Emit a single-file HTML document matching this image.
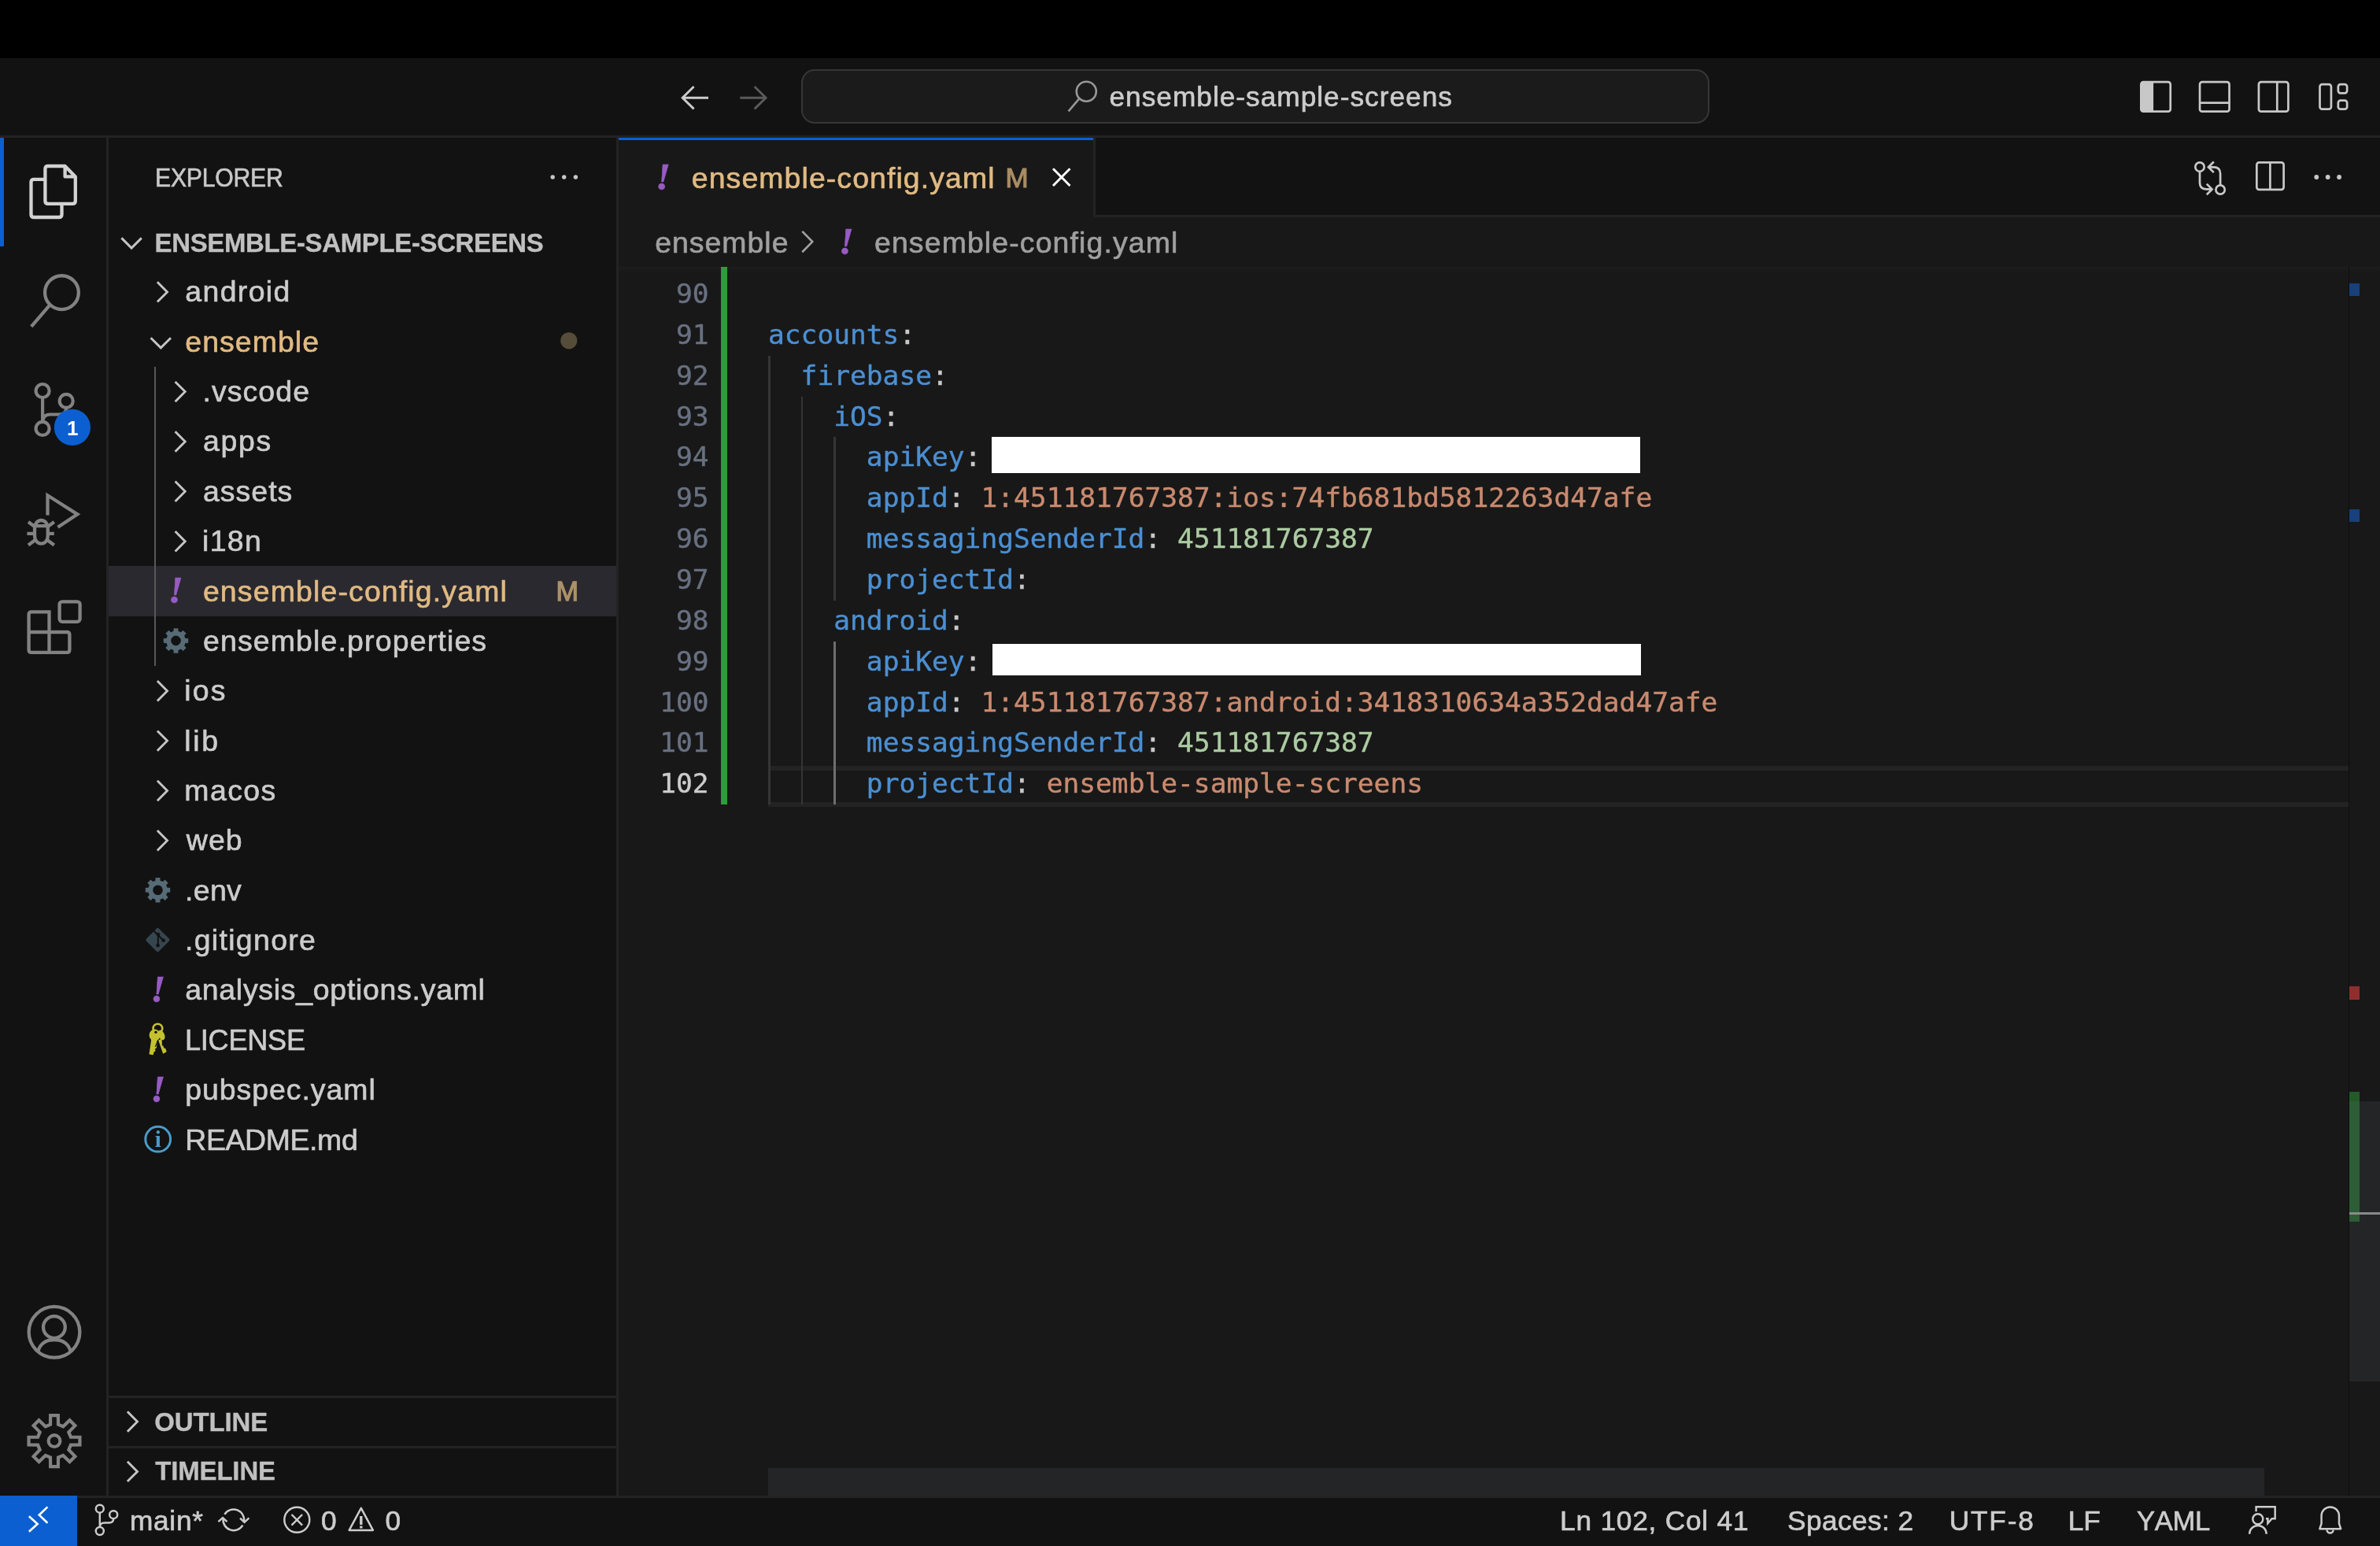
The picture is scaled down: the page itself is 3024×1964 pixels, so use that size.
<!DOCTYPE html>
<html lang="en"><head><meta charset="utf-8"><title>ensemble-config.yaml — ensemble-sample-screens</title>
<style>
html,body{margin:0;padding:0;width:3024px;height:1964px;overflow:hidden;background:#000}
body{position:relative;font-family:"Liberation Sans",sans-serif;color:#ccc;font-kerning:none;-webkit-font-smoothing:antialiased}
.b{position:absolute}
.t{position:absolute;white-space:pre;display:block;-webkit-text-stroke:0.65px currentColor}
.m{-webkit-text-stroke:0.4px currentColor;font-family:"DejaVu Sans Mono","Liberation Mono",monospace;font-size:34.56px;line-height:51.84px}
svg.ov{position:absolute;left:0;top:0}
#w{position:absolute;left:0;top:0;width:3024px;height:1964px;will-change:transform}
</style></head><body><div id="w">
<div class="b" style="left:0px;top:74px;width:3024px;height:98px;background:#121212;"></div>
<div class="b" style="left:0px;top:172px;width:3024px;height:3px;background:#232323;"></div>
<div class="b" style="left:0px;top:175px;width:135px;height:1725px;background:#121212;"></div>
<div class="b" style="left:135px;top:175px;width:3px;height:1725px;background:#232323;"></div>
<div class="b" style="left:138px;top:175px;width:645px;height:1725px;background:#121212;"></div>
<div class="b" style="left:783px;top:175px;width:3px;height:1725px;background:#232323;"></div>
<div class="b" style="left:786px;top:175px;width:2238px;height:1725px;background:#181818;"></div>
<div class="b" style="left:0px;top:1900px;width:3024px;height:64px;background:#121212;"></div>
<div class="b" style="left:0px;top:1900px;width:3024px;height:3px;background:#232323;"></div>
<div class="b" style="left:1018px;top:88.4px;width:1154px;height:68.8px;background:#1b1b1b;box-sizing:border-box;border:2.5px solid #363636;border-radius:17px;"></div>
<span class="t" style="left:1409.50px;top:100.00px;font-size:35.25px;line-height:46px;color:#ccc;letter-spacing:1.000px;">ensemble-sample-screens</span>
<div class="b" style="left:0px;top:175px;width:5px;height:138px;background:#0b5fd0;"></div>
<span class="t" style="left:196.92px;top:204.10px;font-size:32.95px;line-height:43px;color:#c8c8c8;letter-spacing:-0.250px;transform:scaleX(0.9160);transform-origin:0 0;">EXPLORER</span>
<span class="t" style="left:196.60px;top:286.70px;font-size:32.95px;line-height:43px;color:#c0c0c0;letter-spacing:-0.329px;font-weight:700;-webkit-text-stroke:0.3px;">ENSEMBLE-SAMPLE-SCREENS</span>
<div class="b" style="left:138px;top:719.3599999999999px;width:645px;height:63.36px;background:#2a292f;"></div>
<div class="b" style="left:196px;top:466px;width:2px;height:380.0799999999999px;background:#585858;"></div>
<span class="t" style="left:235.31px;top:346.40px;font-size:37.44px;line-height:49px;color:#cccccc;letter-spacing:1.368px;">android</span>
<span class="t" style="left:235.31px;top:409.76px;font-size:37.44px;line-height:49px;color:#e0ba83;letter-spacing:1.074px;">ensemble</span>
<span class="t" style="left:257.48px;top:473.12px;font-size:37.44px;line-height:49px;color:#cccccc;letter-spacing:1.092px;">.vscode</span>
<span class="t" style="left:257.91px;top:536.48px;font-size:37.44px;line-height:49px;color:#cccccc;letter-spacing:1.685px;">apps</span>
<span class="t" style="left:257.91px;top:599.84px;font-size:37.44px;line-height:49px;color:#cccccc;letter-spacing:1.047px;">assets</span>
<span class="t" style="left:257.00px;top:663.20px;font-size:37.44px;line-height:49px;color:#cccccc;letter-spacing:1.317px;">i18n</span>
<span class="t" style="left:257.91px;top:726.56px;font-size:37.44px;line-height:49px;color:#e0ba83;letter-spacing:1.154px;">ensemble-config.yaml</span>
<span class="t" style="left:213.67px;top:718.16px;font-size:49px;line-height:64px;color:#975bc2;font-weight:700;font-style:italic;font-family:'Liberation Serif', serif;-webkit-text-stroke:0.6px;">!</span>
<span class="t" style="left:257.91px;top:789.92px;font-size:37.44px;line-height:49px;color:#cccccc;letter-spacing:1.173px;">ensemble.properties</span>
<span class="t" style="left:234.30px;top:853.28px;font-size:37.44px;line-height:49px;color:#cccccc;letter-spacing:2.149px;">ios</span>
<span class="t" style="left:234.28px;top:916.64px;font-size:37.44px;line-height:49px;color:#cccccc;letter-spacing:2.618px;">lib</span>
<span class="t" style="left:234.31px;top:980.00px;font-size:37.44px;line-height:49px;color:#cccccc;letter-spacing:1.442px;">macos</span>
<span class="t" style="left:236.85px;top:1043.36px;font-size:37.44px;line-height:49px;color:#cccccc;letter-spacing:1.067px;">web</span>
<span class="t" style="left:234.98px;top:1106.72px;font-size:37.44px;line-height:49px;color:#cccccc;letter-spacing:0.360px;">.env</span>
<span class="t" style="left:234.98px;top:1170.08px;font-size:37.44px;line-height:49px;color:#cccccc;letter-spacing:1.329px;">.gitignore</span>
<span class="t" style="left:235.21px;top:1233.44px;font-size:37.44px;line-height:49px;color:#cccccc;letter-spacing:0.732px;">analysis_options.yaml</span>
<span class="t" style="left:191.17px;top:1225.04px;font-size:49px;line-height:64px;color:#975bc2;font-weight:700;font-style:italic;font-family:'Liberation Serif', serif;-webkit-text-stroke:0.6px;">!</span>
<span class="t" style="left:235.44px;top:1296.80px;font-size:37.44px;line-height:49px;color:#cccccc;letter-spacing:-0.250px;transform:scaleX(0.9641);transform-origin:0 0;">LICENSE</span>
<span class="t" style="left:235.19px;top:1360.16px;font-size:37.44px;line-height:49px;color:#cccccc;letter-spacing:0.974px;">pubspec.yaml</span>
<span class="t" style="left:191.17px;top:1351.76px;font-size:49px;line-height:64px;color:#975bc2;font-weight:700;font-style:italic;font-family:'Liberation Serif', serif;-webkit-text-stroke:0.6px;">!</span>
<span class="t" style="left:235.33px;top:1423.52px;font-size:37.44px;line-height:49px;color:#cccccc;letter-spacing:-0.389px;">README.md</span>
<span class="t" style="left:706.59px;top:728.76px;font-size:34.23px;line-height:44px;color:#ac9168;-webkit-text-stroke:1.3px;">M</span>
<div class="b" style="left:138px;top:1773px;width:645px;height:3px;background:#232323;"></div>
<div class="b" style="left:138px;top:1837px;width:645px;height:3px;background:#232323;"></div>
<span class="t" style="left:196.25px;top:1784.60px;font-size:32.95px;line-height:43px;color:#c0c0c0;letter-spacing:-0.111px;font-weight:700;-webkit-text-stroke:0.3px;">OUTLINE</span>
<span class="t" style="left:197.23px;top:1847.40px;font-size:32.95px;line-height:43px;color:#c0c0c0;letter-spacing:-0.129px;font-weight:700;-webkit-text-stroke:0.3px;">TIMELINE</span>
<div class="b" style="left:786px;top:175px;width:2238px;height:98px;background:#121212;"></div>
<div class="b" style="left:786px;top:273px;width:2238px;height:3px;background:#232323;"></div>
<div class="b" style="left:786px;top:175px;width:603px;height:101px;background:#181818;"></div>
<div class="b" style="left:1389px;top:175px;width:3px;height:98px;background:#232323;"></div>
<div class="b" style="left:786px;top:175px;width:603px;height:3px;background:#0b5fd0;"></div>
<span class="t" style="left:833.07px;top:193.10px;font-size:49px;line-height:64px;color:#975bc2;font-weight:700;font-style:italic;font-family:'Liberation Serif', serif;-webkit-text-stroke:0.6px;">!</span>
<span class="t" style="left:878.81px;top:201.80px;font-size:37.44px;line-height:49px;color:#e0ba83;letter-spacing:1.091px;">ensemble-config.yaml</span>
<span class="t" style="left:1277.62px;top:202.70px;font-size:35.05px;line-height:46px;color:#a78c64;-webkit-text-stroke:1.2px;">M</span>
<span class="t" style="left:832.21px;top:283.70px;font-size:37.44px;line-height:49px;color:#a0a0a0;letter-spacing:1.002px;">ensemble</span>
<span class="t" style="left:1065.77px;top:275.00px;font-size:49px;line-height:64px;color:#975bc2;font-weight:700;font-style:italic;font-family:'Liberation Serif', serif;-webkit-text-stroke:0.6px;">!</span>
<span class="t" style="left:1111.01px;top:283.70px;font-size:37.44px;line-height:49px;color:#a0a0a0;letter-spacing:1.123px;">ensemble-config.yaml</span>
<div class="b" style="left:786px;top:339px;width:2238px;height:7px;background:linear-gradient(#1d1d1d,#181818);"></div>
<div class="b" style="left:916px;top:339px;width:8.3px;height:683px;background:#2c9c3c;"></div>
<div class="b" style="left:976px;top:972.6800000000001px;width:2008px;height:6px;background:#232323;"></div>
<div class="b" style="left:976px;top:1019.3800000000001px;width:2008px;height:6px;background:#232323;"></div>
<span class="t m" style="left:858.99px;top:348.10px;color:#687080">90</span>
<span class="t m" style="left:858.99px;top:399.94px;color:#687080">91</span>
<span class="t m" style="left:976.00px;top:399.94px"><span style="color:#4b8fd2">accounts</span><span style="color:#c8c8c8">:</span></span>
<span class="t m" style="left:858.99px;top:451.78px;color:#687080">92</span>
<span class="t m" style="left:1017.61px;top:451.78px"><span style="color:#4b8fd2">firebase</span><span style="color:#c8c8c8">:</span></span>
<div class="b" style="left:976.0px;top:451.78px;width:2.9px;height:52.14px;background:#353535;"></div>
<span class="t m" style="left:858.99px;top:503.62px;color:#687080">93</span>
<span class="t m" style="left:1059.23px;top:503.62px"><span style="color:#4b8fd2">iOS</span><span style="color:#c8c8c8">:</span></span>
<div class="b" style="left:976.0px;top:503.62px;width:2.9px;height:52.14px;background:#353535;"></div>
<div class="b" style="left:1017.6px;top:503.62px;width:2.9px;height:52.14px;background:#353535;"></div>
<span class="t m" style="left:858.99px;top:555.46px;color:#687080">94</span>
<span class="t m" style="left:1100.84px;top:555.46px"><span style="color:#4b8fd2">apiKey</span><span style="color:#c8c8c8">:</span></span>
<div class="b" style="left:976.0px;top:555.46px;width:2.9px;height:52.14px;background:#353535;"></div>
<div class="b" style="left:1017.6px;top:555.46px;width:2.9px;height:52.14px;background:#353535;"></div>
<div class="b" style="left:1059.2px;top:555.46px;width:2.9px;height:52.14px;background:#353535;"></div>
<span class="t m" style="left:858.99px;top:607.30px;color:#687080">95</span>
<span class="t m" style="left:1100.84px;top:607.30px"><span style="color:#4b8fd2">appId</span><span style="color:#c8c8c8">:</span><span style="color:#c98a6f"> 1:451181767387:ios:74fb681bd5812263d47afe</span></span>
<div class="b" style="left:976.0px;top:607.3px;width:2.9px;height:52.14px;background:#353535;"></div>
<div class="b" style="left:1017.6px;top:607.3px;width:2.9px;height:52.14px;background:#353535;"></div>
<div class="b" style="left:1059.2px;top:607.3px;width:2.9px;height:52.14px;background:#353535;"></div>
<span class="t m" style="left:858.99px;top:659.14px;color:#687080">96</span>
<span class="t m" style="left:1100.84px;top:659.14px"><span style="color:#4b8fd2">messagingSenderId</span><span style="color:#c8c8c8">:</span><span style="color:#accba2"> 451181767387</span></span>
<div class="b" style="left:976.0px;top:659.14px;width:2.9px;height:52.14px;background:#353535;"></div>
<div class="b" style="left:1017.6px;top:659.14px;width:2.9px;height:52.14px;background:#353535;"></div>
<div class="b" style="left:1059.2px;top:659.14px;width:2.9px;height:52.14px;background:#353535;"></div>
<span class="t m" style="left:858.99px;top:710.98px;color:#687080">97</span>
<span class="t m" style="left:1100.84px;top:710.98px"><span style="color:#4b8fd2">projectId</span><span style="color:#c8c8c8">:</span></span>
<div class="b" style="left:976.0px;top:710.98px;width:2.9px;height:52.14px;background:#353535;"></div>
<div class="b" style="left:1017.6px;top:710.98px;width:2.9px;height:52.14px;background:#353535;"></div>
<div class="b" style="left:1059.2px;top:710.98px;width:2.9px;height:52.14px;background:#353535;"></div>
<span class="t m" style="left:858.99px;top:762.82px;color:#687080">98</span>
<span class="t m" style="left:1059.23px;top:762.82px"><span style="color:#4b8fd2">android</span><span style="color:#c8c8c8">:</span></span>
<div class="b" style="left:976.0px;top:762.82px;width:2.9px;height:52.14px;background:#353535;"></div>
<div class="b" style="left:1017.6px;top:762.82px;width:2.9px;height:52.14px;background:#353535;"></div>
<span class="t m" style="left:858.99px;top:814.66px;color:#687080">99</span>
<span class="t m" style="left:1100.84px;top:814.66px"><span style="color:#4b8fd2">apiKey</span><span style="color:#c8c8c8">:</span></span>
<div class="b" style="left:976.0px;top:814.66px;width:2.9px;height:52.14px;background:#353535;"></div>
<div class="b" style="left:1017.6px;top:814.66px;width:2.9px;height:52.14px;background:#353535;"></div>
<div class="b" style="left:1059.2px;top:814.66px;width:2.9px;height:52.14px;background:#6e6e6e;"></div>
<span class="t m" style="left:838.18px;top:866.50px;color:#687080">100</span>
<span class="t m" style="left:1100.84px;top:866.50px"><span style="color:#4b8fd2">appId</span><span style="color:#c8c8c8">:</span><span style="color:#c98a6f"> 1:451181767387:android:3418310634a352dad47afe</span></span>
<div class="b" style="left:976.0px;top:866.5px;width:2.9px;height:52.14px;background:#353535;"></div>
<div class="b" style="left:1017.6px;top:866.5px;width:2.9px;height:52.14px;background:#353535;"></div>
<div class="b" style="left:1059.2px;top:866.5px;width:2.9px;height:52.14px;background:#6e6e6e;"></div>
<span class="t m" style="left:838.18px;top:918.34px;color:#687080">101</span>
<span class="t m" style="left:1100.84px;top:918.34px"><span style="color:#4b8fd2">messagingSenderId</span><span style="color:#c8c8c8">:</span><span style="color:#accba2"> 451181767387</span></span>
<div class="b" style="left:976.0px;top:918.34px;width:2.9px;height:52.14px;background:#353535;"></div>
<div class="b" style="left:1017.6px;top:918.34px;width:2.9px;height:52.14px;background:#353535;"></div>
<div class="b" style="left:1059.2px;top:918.34px;width:2.9px;height:52.14px;background:#6e6e6e;"></div>
<span class="t m" style="left:838.18px;top:970.18px;color:#cccccc">102</span>
<span class="t m" style="left:1100.84px;top:970.18px"><span style="color:#4b8fd2">projectId</span><span style="color:#c8c8c8">:</span><span style="color:#c98a6f"> ensemble-sample-screens</span></span>
<div class="b" style="left:976.0px;top:970.18px;width:2.9px;height:52.14px;background:#353535;"></div>
<div class="b" style="left:1017.6px;top:970.18px;width:2.9px;height:52.14px;background:#353535;"></div>
<div class="b" style="left:1059.2px;top:970.18px;width:2.9px;height:52.14px;background:#6e6e6e;"></div>
<div class="b" style="left:1260px;top:555px;width:824px;height:46px;background:#ffffff;"></div>
<div class="b" style="left:1261px;top:818px;width:824px;height:40px;background:#ffffff;"></div>
<div class="b" style="left:2984px;top:339px;width:1px;height:1561px;background:#0d0d0d;"></div>
<div class="b" style="left:2985px;top:360px;width:13px;height:16px;background:#18407a;"></div>
<div class="b" style="left:2985px;top:646.6px;width:13px;height:16px;background:#18407a;"></div>
<div class="b" style="left:2985px;top:1253.4px;width:13.3px;height:16.3px;background:#922d2d;"></div>
<div class="b" style="left:2985px;top:1386.8px;width:13px;height:165.5px;background:#225a28;"></div>
<div class="b" style="left:2985px;top:1399px;width:39px;height:356.3px;background:rgba(110,112,120,0.15);"></div>
<div class="b" style="left:2985px;top:1539.5px;width:39px;height:3px;background:#8a8a8a;"></div>
<div class="b" style="left:976px;top:1864.5px;width:1901px;height:36px;background:#242527;"></div>
<div class="b" style="left:0px;top:1900px;width:98px;height:64px;background:#0b5fd0;"></div>
<span class="t" style="left:164.96px;top:1908.70px;font-size:35.25px;line-height:46px;color:#ccc;letter-spacing:0.718px;">main*</span>
<span class="t" style="left:407.92px;top:1908.70px;font-size:35.25px;line-height:46px;color:#ccc;">0</span>
<span class="t" style="left:489.42px;top:1908.70px;font-size:35.25px;line-height:46px;color:#ccc;">0</span>
<span class="t" style="left:1982.11px;top:1909.00px;font-size:35.25px;line-height:46px;color:#ccc;letter-spacing:0.778px;">Ln 102, Col 41</span>
<span class="t" style="left:2271.10px;top:1909.00px;font-size:35.25px;line-height:46px;color:#ccc;letter-spacing:0.401px;">Spaces: 2</span>
<span class="t" style="left:2476.78px;top:1909.00px;font-size:35.25px;line-height:46px;color:#ccc;letter-spacing:1.797px;">UTF-8</span>
<span class="t" style="left:2627.81px;top:1909.00px;font-size:35.25px;line-height:46px;color:#ccc;letter-spacing:-0.233px;">LF</span>
<span class="t" style="left:2714.94px;top:1909.00px;font-size:35.25px;line-height:46px;color:#ccc;letter-spacing:-0.250px;transform:scaleX(0.9786);transform-origin:0 0;">YAML</span>
<svg class="ov" width="3024" height="1964" viewBox="0 0 3024 1964" fill="none" stroke-linecap="butt" stroke-linejoin="miter">
<path d="M900.0 124.2H867.2 M881.6 110.0L867.2 124.2L881.6 138.4" stroke="#cccccc" stroke-width="2.9"/>
<path d="M940.3 124.2H973.0999999999999 M958.6999999999999 110.0L973.0999999999999 124.2L958.6999999999999 138.4" stroke="#5a5a5a" stroke-width="2.9"/>
<circle cx="1380.3" cy="116.2" r="12.5" stroke="#989898" stroke-width="2.6"/><path d="M1371.4 125.1L1357.6 141.4" stroke="#989898" stroke-width="2.6"/>
<rect x="2720.35" y="104.15" width="37.40" height="37.50" rx="3" stroke="#c8c8c8" stroke-width="2.7" />
<path d="M2722.5 104.3H2736.1V141.5H2722.5Q2720.5 141.5 2720.5 139.5V106.3Q2720.5 104.3 2722.5 104.3Z" fill="#c8c8c8"/>
<rect x="2795.05" y="104.15" width="37.50" height="37.50" rx="3" stroke="#c8c8c8" stroke-width="2.7" />
<path d="M2795 130.6H2832.5" stroke="#c8c8c8" stroke-width="2.7"/>
<rect x="2869.95" y="104.15" width="37.50" height="37.50" rx="3" stroke="#c8c8c8" stroke-width="2.7" />
<path d="M2893.3 104V141.8" stroke="#c8c8c8" stroke-width="2.7"/>
<rect x="2947.55" y="107.05" width="14.40" height="31.60" rx="3" stroke="#c8c8c8" stroke-width="2.7" />
<rect x="2970.85" y="107.05" width="11.30" height="11.30" rx="3" stroke="#c8c8c8" stroke-width="2.7" />
<rect x="2970.85" y="127.65" width="11.30" height="11.00" rx="3" stroke="#c8c8c8" stroke-width="2.7" />
<path d="M82.6 211H61Q57.4 211 57.4 214.6V255.3Q57.4 258.9 61 258.9H92.2Q95.8 258.9 95.8 255.3V224.4Z M82.6 211V224.4H95.8" stroke="#d2d2d2" stroke-width="4.3" stroke-linejoin="round"/>
<path d="M57.4 227.9H43.1Q39.5 227.9 39.5 231.5V272.4Q39.5 276 43.1 276H74.9Q78.5 276 78.5 272.4V258.9" stroke="#d2d2d2" stroke-width="4.3"/>
<circle cx="78.45" cy="371.65" r="21.4" stroke="#828282" stroke-width="4.3"/><path d="M63.6 387.1L39.8 414.9" stroke="#828282" stroke-width="4.3"/>
<g stroke="#828282" stroke-width="4.2"><circle cx="54.1" cy="496.5" r="8.5"/><circle cx="84.2" cy="509.4" r="8.5"/><circle cx="54.1" cy="544.4" r="8.5"/><path d="M54.1 505V536"/><path d="M84.2 517.9Q84.2 526.5 75 526.5H64Q54.1 526.5 54.1 537"/></g>
<circle cx="91.9" cy="542.9" r="23.1" fill="#0b5fd0"/><text x="92.2" y="552.8" text-anchor="middle" font-family="Liberation Sans, sans-serif" font-weight="700" font-size="26" fill="#fff" stroke="none">1</text>
<g stroke="#828282" stroke-width="4.3"><path d="M60.5 654.5V629.3L98.4 653.4L73.5 669.8"/><rect x="44.05" y="661" width="16.7" height="29.7" rx="8.35" ry="9.5"/><path d="M34.4 677.9H44.1M60.7 677.9H68.8M36 663L45 669.8M68.8 663L59.8 669.8M36 692.5L45 685.8M68.8 692.5L59.8 685.8M44.5 668.2H60.3"/></g>
<g stroke="#828282" stroke-width="4.3"><path d="M40 777.4H62.5V803H85Q88.4 803 88.4 806.4V825.4Q88.4 828.8 85 828.8H40Q36.6 828.8 36.6 825.4V780.8Q36.6 777.4 40 777.4ZM36.6 803H62.5V828.8"/><rect x="75.6" y="764.3" width="26" height="25.5" rx="3.5"/></g>
<g stroke="#828282" stroke-width="4.3"><circle cx="69" cy="1692.3" r="32.35"/><circle cx="68.9" cy="1686" r="13.9"/><path d="M48.3 1717.2C50.5 1707 58.5 1702 69 1702C79.5 1702 87.5 1707 89.7 1717.2"/></g>
<path d="M63.98 1809.69L64.15 1798.16L73.85 1798.16L74.02 1809.69L80.23 1812.27L88.51 1804.23L95.37 1811.09L87.33 1819.37L89.91 1825.58L101.44 1825.75L101.44 1835.45L89.91 1835.62L87.33 1841.83L95.37 1850.11L88.51 1856.97L80.23 1848.93L74.02 1851.51L73.85 1863.04L64.15 1863.04L63.98 1851.51L57.77 1848.93L49.49 1856.97L42.63 1850.11L50.67 1841.83L48.09 1835.62L36.56 1835.45L36.56 1825.75L48.09 1825.58L50.67 1819.37L42.63 1811.09L49.49 1804.23L57.77 1812.27Z" stroke="#828282" stroke-width="4.2" stroke-linejoin="miter"/><circle cx="69" cy="1830.6" r="7.4" stroke="#828282" stroke-width="4.2"/>
<circle cx="702.2" cy="225" r="2.7" fill="#c8c8c8"/>
<circle cx="716.7" cy="225" r="2.7" fill="#c8c8c8"/>
<circle cx="731.4" cy="225" r="2.7" fill="#c8c8c8"/>
<path d="M154.4 302.4L167.1 315.1L179.8 302.4" stroke="#c5c5c5" stroke-width="2.9"/>
<path d="M199.9 358.2L212.5 370.9L199.9 383.6" stroke="#c5c5c5" stroke-width="2.9"/>
<path d="M191.6 429.2L204.3 441.9L217.0 429.2" stroke="#c5c5c5" stroke-width="2.9"/>
<path d="M222.6 484.9L235.2 497.6L222.6 510.3" stroke="#c5c5c5" stroke-width="2.9"/>
<path d="M222.6 548.3L235.2 561.0L222.6 573.7" stroke="#c5c5c5" stroke-width="2.9"/>
<path d="M222.6 611.6L235.2 624.3L222.6 637.0" stroke="#c5c5c5" stroke-width="2.9"/>
<path d="M222.6 675.0L235.2 687.7L222.6 700.4" stroke="#c5c5c5" stroke-width="2.9"/>
<path fill-rule="evenodd" d="M220.50 801.87L220.58 798.17L226.42 798.17L226.50 801.87L229.89 803.27L232.56 800.71L236.69 804.84L234.13 807.51L235.53 810.90L239.23 810.98L239.23 816.82L235.53 816.90L234.13 820.29L236.69 822.96L232.56 827.09L229.89 824.53L226.50 825.93L226.42 829.63L220.58 829.63L220.50 825.93L217.11 824.53L214.44 827.09L210.31 822.96L212.87 820.29L211.47 816.90L207.77 816.82L207.77 810.98L211.47 810.90L212.87 807.51L210.31 804.84L214.44 800.71L217.11 803.27Z M229.8 813.9A6.3 6.3 0 1 0 217.2 813.9A6.3 6.3 0 1 0 229.8 813.9Z" fill="#566b76"/>
<path d="M199.9 865.1L212.5 877.8L199.9 890.5" stroke="#c5c5c5" stroke-width="2.9"/>
<path d="M199.9 928.4L212.5 941.1L199.9 953.8" stroke="#c5c5c5" stroke-width="2.9"/>
<path d="M199.9 991.8L212.5 1004.5L199.9 1017.2" stroke="#c5c5c5" stroke-width="2.9"/>
<path d="M199.9 1055.1L212.5 1067.8L199.9 1080.5" stroke="#c5c5c5" stroke-width="2.9"/>
<path fill-rule="evenodd" d="M197.50 1118.67L197.58 1114.97L203.42 1114.97L203.50 1118.67L206.89 1120.07L209.56 1117.51L213.69 1121.64L211.13 1124.31L212.53 1127.70L216.23 1127.78L216.23 1133.62L212.53 1133.70L211.13 1137.09L213.69 1139.76L209.56 1143.89L206.89 1141.33L203.50 1142.73L203.42 1146.43L197.58 1146.43L197.50 1142.73L194.11 1141.33L191.44 1143.89L187.31 1139.76L189.87 1137.09L188.47 1133.70L184.77 1133.62L184.77 1127.78L188.47 1127.70L189.87 1124.31L187.31 1121.64L191.44 1117.51L194.11 1120.07Z M206.8 1130.7A6.3 6.3 0 1 0 194.2 1130.7A6.3 6.3 0 1 0 206.8 1130.7Z" fill="#566b76"/>
<rect x="189.1" y="1182.76" width="22.6" height="22.6" rx="2.2" transform="rotate(45 200.4 1194.06)" fill="#36464f"/>
<g stroke="#121212" stroke-width="2.1"><path d="M195.20000000000002 1182.26L207.6 1194.6599999999999M200.8 1187.06V1201.06"/></g><circle cx="200.6" cy="1201.06" r="2.4" fill="#121212"/><circle cx="207.6" cy="1194.6599999999999" r="2.4" fill="#121212"/><circle cx="201.0" cy="1187.06" r="2.4" fill="#121212"/>
<g transform="translate(0.00 -0.02)"><circle cx="200.4" cy="1306.6" r="5.9" stroke="#c3c22e" stroke-width="2.6"/><g fill="#c3c22e"><ellipse cx="205.2" cy="1315" rx="3.8" ry="6.6" transform="rotate(-22 205.2 1315)"/><path d="M201.2 1321.5L207.2 1338.8L211.8 1336L210 1331.6L208.3 1331.8L207.5 1328.6L206 1328.4L205.6 1319.5Z"/><ellipse cx="196.6" cy="1315" rx="7" ry="7.4"/><path d="M192.3 1320L189.5 1339.2L194.6 1340.2L195.6 1336.2L197.4 1335.4L197.1 1332.2L198.9 1331.2L199.8 1321Z"/></g><path d="M200.6 1321.5L197.3 1330" stroke="#121212" stroke-width="1.1"/><circle cx="198" cy="1311.3" r="1.7" fill="#121212"/></g>
<circle cx="200.7" cy="1447.2" r="15.9" stroke="#4a9bc9" stroke-width="3"/>
<text x="200.7" y="1456.5" text-anchor="middle" font-family="Liberation Serif, serif" font-weight="700" font-size="29" fill="#4a9bc9">i</text>
<circle cx="722.8" cy="432.8" r="10.6" fill="#564c3a"/>
<path d="M161.9 1793.3L174.5 1806.0L161.9 1818.7" stroke="#c5c5c5" stroke-width="2.9"/>
<path d="M161.9 1856.7L174.5 1869.4L161.9 1882.1" stroke="#c5c5c5" stroke-width="2.9"/>
<path d="M1338 214.2L1359.5 235.9M1359.5 214.2L1338 235.9" stroke="#ffffff" stroke-width="2.9"/>
<g stroke="#c8c8c8" stroke-width="2.7"><circle cx="2795" cy="212.1" r="5.7"/><circle cx="2821.1" cy="241" r="5.7"/><path d="M2795 217.8V232Q2795 240.4 2803.4 240.4H2809.5 M2803.8 233.6L2810.6 240.4L2803.8 247.2"/><path d="M2821.1 235.3V220.7Q2821.1 212.3 2812.7 212.3H2807 M2812.8 205.5L2806 212.3L2812.8 219.1"/></g>
<rect x="2867.35" y="206.35" width="34.30" height="34.50" rx="3" stroke="#c8c8c8" stroke-width="2.7" />
<path d="M2884.4 206V241" stroke="#c8c8c8" stroke-width="2.7"/>
<circle cx="2943.3" cy="225" r="2.9" fill="#c8c8c8"/>
<circle cx="2957.7" cy="225" r="2.9" fill="#c8c8c8"/>
<circle cx="2972.1" cy="225" r="2.9" fill="#c8c8c8"/>
<path d="M1019.3 293.9L1032.2 307.1L1019.3 320.3" stroke="#a0a0a0" stroke-width="2.7"/>
<path d="M36.9 1926.2L47.6 1936L36.9 1945.8M60.4 1914.4L49.8 1924.6L60.4 1934.8" stroke="#ffffff" stroke-width="2.7"/>
<g stroke="#cccccc" stroke-width="2.45"><circle cx="126.8" cy="1916.7" r="5"/><circle cx="144.2" cy="1924.2" r="5"/><circle cx="126.8" cy="1945" r="5"/><path d="M126.8 1921.7V1940M144.2 1929.2Q144.2 1934.5 138.5 1934.5H133Q126.8 1934.5 126.8 1940"/></g>
<g stroke="#cccccc" stroke-width="2.45"><path d="M285.4 1923.8A13.4 13.4 0 0 1 309.9 1933.5M308.4 1937.6A13.4 13.4 0 0 1 283.6 1928.9"/><path d="M277.4 1933.1L283 1928.1L288.5 1933.1M305 1928.6L310.6 1933.9L316.4 1928.4"/></g>
<g stroke="#cccccc" stroke-width="2.45"><circle cx="377.3" cy="1930.8" r="16"/><path d="M370.5 1924L384.1 1937.6M384.1 1924L370.5 1937.6"/></g>
<g stroke="#cccccc" stroke-width="2.45" stroke-linejoin="round"><path d="M458.8 1915.8L473.9 1943.9H443.7Z"/><path d="M458.8 1926V1937.1M458.8 1938.4V1941.4" stroke-width="3.4"/></g>
<g stroke="#cccccc" stroke-width="2.45"><circle cx="2868.8" cy="1929.7" r="6.5"/><path d="M2858.1 1948.8A10.8 10.8 0 0 1 2879.7 1948.8"/><path d="M2866.6 1920.2V1914.2H2890.7V1929.3H2886.6L2881.4 1935.2V1929.3H2879"/></g>
<g stroke="#cccccc" stroke-width="2.45"><path d="M2947.4 1942.2L2949.6 1935.5V1925.6A11.2 11.2 0 0 1 2972 1925.6V1935.5L2974.2 1942.2Z" stroke-linejoin="round"/><path d="M2956.6 1943.5A4 4 0 0 0 2964.6 1943.5"/></g>
</svg>
</div></body></html>
